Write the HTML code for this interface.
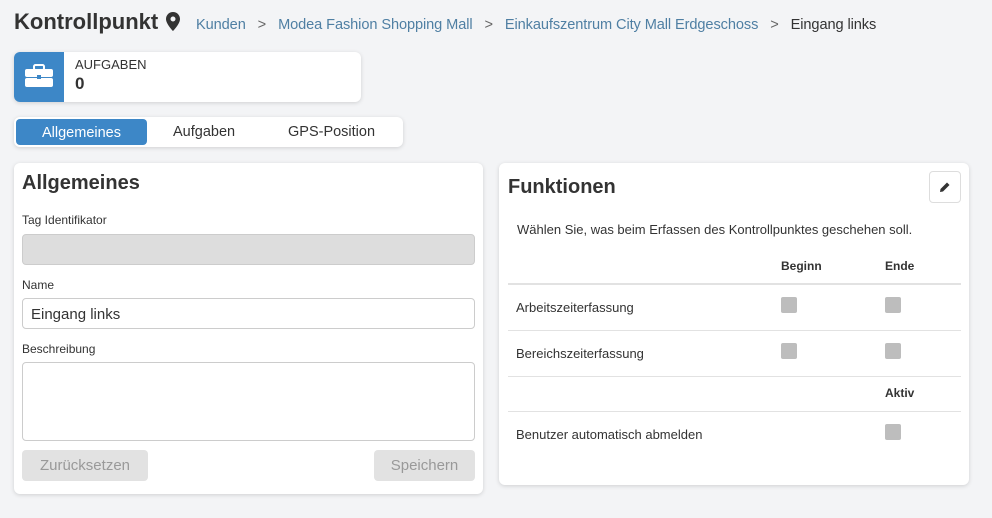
<!DOCTYPE html><html><head><meta charset="utf-8"><style>
*{box-sizing:border-box;margin:0;padding:0}
body{width:992px;height:518px;background:#f3f4f6;font-family:"Liberation Sans",sans-serif;color:#333;position:relative;overflow:hidden}
.a{position:absolute;white-space:nowrap}
.card{position:absolute;background:#fff;border-radius:6px;box-shadow:0 1px 4px rgba(0,0,0,.15)}
.lbl{font-size:12px;color:#333}
.inp{position:absolute;border:1px solid #ccc;border-radius:4px;background:#fff}
.btn{position:absolute;background:#e2e2e2;border-radius:4px;color:#999;font-size:15px;text-align:center;line-height:31px}
.cb{position:absolute;width:16px;height:16px;background:#bdbdbd;border-radius:2px}
.hl{position:absolute;left:508px;width:453px;height:1px;background:#e2e2e2}
</style></head><body>
<div class="a" style="left:14px;top:9px;font-size:22px;font-weight:bold;color:#333">Kontrollpunkt</div>
<svg class="a" style="left:166px;top:12px" width="14" height="19" viewBox="0 0 14 19"><path d="M7 0C3.1 0 0 3.1 0 7c0 5 7 12 7 12s7-7 7-12C14 3.1 10.9 0 7 0zm0 9.5A2.5 2.5 0 1 1 7 4.5a2.5 2.5 0 0 1 0 5z" fill="#333"/></svg>
<div class="a" style="left:196px;top:17px;font-size:14.6px;color:#4f7fa3;letter-spacing:-0.1px">Kunden <span style="color:#666;margin:0 8px">&gt;</span> Modea Fashion Shopping Mall <span style="color:#666;margin:0 8px">&gt;</span> Einkaufszentrum City Mall Erdgeschoss <span style="color:#666;margin:0 8px">&gt;</span> <span style="color:#333">Eingang links</span></div>
<div class="card" style="left:14px;top:52px;width:347px;height:50px;overflow:hidden">
<div style="position:absolute;left:0;top:0;width:50px;height:50px;background:#3d87c7"></div>
<svg style="position:absolute;left:11px;top:12px" width="28" height="24" viewBox="0 0 28 24"><rect x="9" y="1" width="10" height="5" rx="1.5" fill="none" stroke="#fff" stroke-width="2"/><rect x="0" y="5" width="28" height="8" rx="2" fill="#fff"/><rect x="0" y="14" width="28" height="9" rx="2" fill="#fff"/><rect x="12" y="11" width="4" height="4" fill="#3d87c7"/></svg>
<div class="a" style="left:61px;top:5px;font-size:13px">AUFGABEN</div>
<div class="a" style="left:61px;top:22px;font-size:17px;font-weight:bold">0</div></div>
<div class="card" style="left:14px;top:117px;width:389px;height:30px">
<div style="position:absolute;left:2px;top:2px;width:131px;height:26px;background:#3d87c7;border-radius:4px;color:#fff;font-size:14.5px;text-align:center;line-height:28px">Allgemeines</div>
<div class="a" style="left:159px;top:7px;font-size:14.5px">Aufgaben</div>
<div class="a" style="left:274px;top:7px;font-size:14.5px">GPS-Position</div></div>
<div class="card" style="left:14px;top:163px;width:469px;height:331px"></div>
<div class="a" style="left:22px;top:172px;font-size:20px;font-weight:bold">Allgemeines</div>
<div class="a lbl" style="left:22px;top:213px">Tag Identifikator</div>
<div class="inp" style="left:22px;top:234px;width:453px;height:31px;background:#ddd"></div>
<div class="a lbl" style="left:22px;top:278px">Name</div>
<div class="inp" style="left:22px;top:298px;width:453px;height:31px"></div>
<div class="a" style="left:31px;top:306px;font-size:15px">Eingang links</div>
<div class="a lbl" style="left:22px;top:342px">Beschreibung</div>
<div class="inp" style="left:22px;top:362px;width:453px;height:79px"></div>
<div class="btn" style="left:22px;top:450px;width:126px">Zurücksetzen</div>
<div class="btn" style="left:374px;top:450px;width:101px">Speichern</div>
<div class="card" style="left:499px;top:163px;width:470px;height:322px"></div>
<div class="a" style="left:508px;top:176px;font-size:20px;font-weight:bold">Funktionen</div>
<div style="position:absolute;left:929px;top:171px;width:32px;height:32px;border:1px solid #ddd;border-radius:4px;background:#fff"></div>
<svg class="a" style="left:939px;top:181px" width="12" height="12" viewBox="0 0 12 12"><path d="M1 11l.5-3L8 1.5l2.5 2.5L4 10.5z" fill="#333"/></svg>
<div class="a" style="left:517px;top:222px;font-size:13px">Wählen Sie, was beim Erfassen des Kontrollpunktes geschehen soll.</div>
<div class="a" style="left:781px;top:259px;font-size:12px;font-weight:bold">Beginn</div>
<div class="a" style="left:885px;top:259px;font-size:12px;font-weight:bold">Ende</div>
<div class="hl" style="top:283px;height:2px"></div>
<div class="a" style="left:516px;top:300px;font-size:13px">Arbeitszeiterfassung</div>
<div class="cb" style="left:781px;top:297px"></div><div class="cb" style="left:885px;top:297px"></div>
<div class="hl" style="top:330px"></div>
<div class="a" style="left:516px;top:346px;font-size:13px">Bereichszeiterfassung</div>
<div class="cb" style="left:781px;top:343px"></div><div class="cb" style="left:885px;top:343px"></div>
<div class="hl" style="top:376px"></div>
<div class="a" style="left:885px;top:386px;font-size:12px;font-weight:bold">Aktiv</div>
<div class="hl" style="top:411px"></div>
<div class="a" style="left:516px;top:427px;font-size:13px">Benutzer automatisch abmelden</div>
<div class="cb" style="left:885px;top:424px"></div>
</body></html>
